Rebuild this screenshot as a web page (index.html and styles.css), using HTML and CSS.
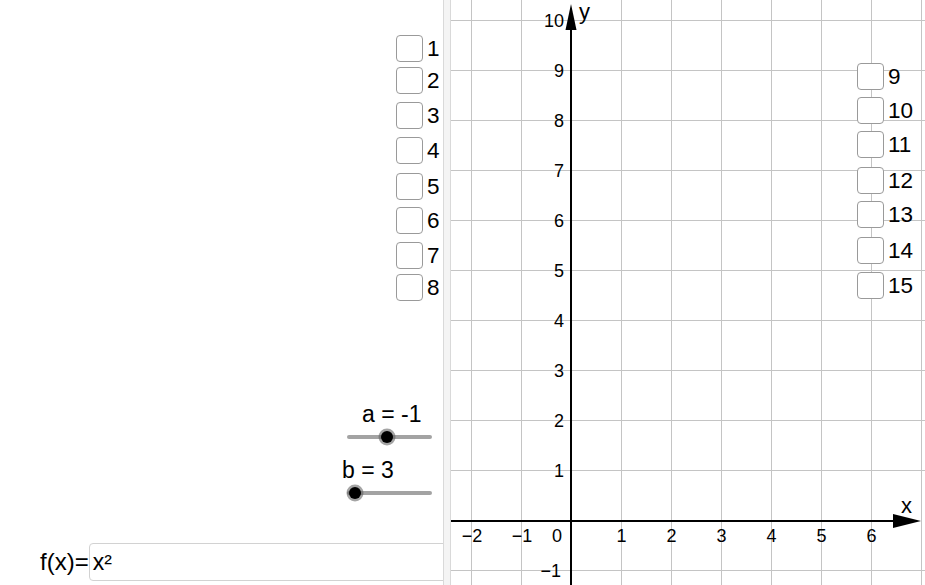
FILE: index.html
```html
<!DOCTYPE html>
<html>
<head>
<meta charset="utf-8">
<link rel="stylesheet" href="styles.css">
</head>
<body>
<div class="app">
  <div class="left">
    <label class="cb" style="top:35px;left:396px"><span class="box"></span><span class="cb-text">1</span></label>
    <label class="cb" style="top:67px;left:396px"><span class="box"></span><span class="cb-text">2</span></label>
    <label class="cb" style="top:102px;left:396px"><span class="box"></span><span class="cb-text">3</span></label>
    <label class="cb" style="top:137px;left:396px"><span class="box"></span><span class="cb-text">4</span></label>
    <label class="cb" style="top:173px;left:396px"><span class="box"></span><span class="cb-text">5</span></label>
    <label class="cb" style="top:207px;left:396px"><span class="box"></span><span class="cb-text">6</span></label>
    <label class="cb" style="top:242px;left:396px"><span class="box"></span><span class="cb-text">7</span></label>
    <label class="cb" style="top:274px;left:396px"><span class="box"></span><span class="cb-text">8</span></label>

    <div class="slider slider-a">
      <div class="slider-label">a = -1</div>
      <div class="track"><span class="knob" style="left:40px"></span></div>
    </div>
    <div class="slider slider-b">
      <div class="slider-label">b = 3</div>
      <div class="track"><span class="knob" style="left:8px"></span></div>
    </div>

    <div class="input-row">
      <span class="input-label">f(x)=</span>
      <div class="input-box">x²</div>
    </div>
  </div>
  <div class="divider"></div>
  <div class="graphics">
    <svg class="plot" width="474" height="585" viewBox="451 0 474 585" xmlns="http://www.w3.org/2000/svg">
      <g class="grid" stroke="#c4c4c4" stroke-width="1">
        <line x1="471.5" y1="0" x2="471.5" y2="585"/>
        <line x1="521.5" y1="0" x2="521.5" y2="585"/>
        <line x1="621.5" y1="0" x2="621.5" y2="585"/>
        <line x1="671.5" y1="0" x2="671.5" y2="585"/>
        <line x1="721.5" y1="0" x2="721.5" y2="585"/>
        <line x1="771.5" y1="0" x2="771.5" y2="585"/>
        <line x1="821.5" y1="0" x2="821.5" y2="585"/>
        <line x1="871.5" y1="0" x2="871.5" y2="585"/>
        <line x1="921.5" y1="0" x2="921.5" y2="585"/>
        <line x1="451" y1="20.5" x2="925" y2="20.5"/>
        <line x1="451" y1="70.5" x2="925" y2="70.5"/>
        <line x1="451" y1="120.5" x2="925" y2="120.5"/>
        <line x1="451" y1="170.5" x2="925" y2="170.5"/>
        <line x1="451" y1="220.5" x2="925" y2="220.5"/>
        <line x1="451" y1="270.5" x2="925" y2="270.5"/>
        <line x1="451" y1="320.5" x2="925" y2="320.5"/>
        <line x1="451" y1="370.5" x2="925" y2="370.5"/>
        <line x1="451" y1="420.5" x2="925" y2="420.5"/>
        <line x1="451" y1="470.5" x2="925" y2="470.5"/>
        <line x1="451" y1="570.5" x2="925" y2="570.5"/>
      </g>
      <g class="axes" stroke="#000" stroke-width="2">
        <line x1="451" y1="521" x2="896" y2="521"/>
        <line x1="571" y1="26" x2="571" y2="585"/>
      </g>
      <polygon points="571,4 565.5,30 576.5,30" fill="#000"/>
      <polygon points="921,521 893,514 893,528" fill="#000"/>
      <g class="ylabels" text-anchor="end">
        <text x="564" y="27">10</text>
        <text x="564" y="77">9</text>
        <text x="564" y="127">8</text>
        <text x="564" y="177">7</text>
        <text x="564" y="227">6</text>
        <text x="564" y="277">5</text>
        <text x="564" y="327">4</text>
        <text x="564" y="377">3</text>
        <text x="564" y="427">2</text>
        <text x="564" y="477">1</text>
        <text x="561" y="577">−1</text>
      </g>
      <g class="xlabels" text-anchor="middle">
        <text x="472" y="542">−2</text>
        <text x="522" y="542">−1</text>
        <text x="557" y="542">0</text>
        <text x="621.5" y="542">1</text>
        <text x="671.5" y="542">2</text>
        <text x="721.5" y="542">3</text>
        <text x="771.5" y="542">4</text>
        <text x="821.5" y="542">5</text>
        <text x="871.5" y="542">6</text>
      </g>
      <text class="axis-name" x="579" y="19">y</text>
      <text class="axis-name" x="901" y="513">x</text>
    </svg>
    <label class="cb" style="top:63px;left:406px"><span class="box"></span><span class="cb-text">9</span></label>
    <label class="cb" style="top:97px;left:406px"><span class="box"></span><span class="cb-text">10</span></label>
    <label class="cb" style="top:131px;left:406px"><span class="box"></span><span class="cb-text">11</span></label>
    <label class="cb" style="top:167px;left:406px"><span class="box"></span><span class="cb-text">12</span></label>
    <label class="cb" style="top:201px;left:406px"><span class="box"></span><span class="cb-text">13</span></label>
    <label class="cb" style="top:237px;left:406px"><span class="box"></span><span class="cb-text">14</span></label>
    <label class="cb" style="top:272px;left:406px"><span class="box"></span><span class="cb-text">15</span></label>
  </div>
</div>
</body>
</html>
```

FILE: styles.css
```css
html, body {
  margin: 0;
  padding: 0;
  background: #fff;
}

body {
  font-family: "Liberation Sans", Arial, sans-serif;
  color: #000;
  overflow: hidden;
}

.app {
  display: flex;
  width: 925px;
  height: 585px;
  overflow: hidden;
}

.left {
  position: relative;
  width: 443px;
  flex-shrink: 0;
  overflow: hidden;
  display: flex;
  flex-direction: column;
  justify-content: flex-end;
}

.divider {
  width: 6px;
  flex-shrink: 0;
  background: #f4f4f4;
  border-left: 1px solid #d9d9d9;
  border-right: 1px solid #d9d9d9;
}

.graphics {
  position: relative;
  flex: 1;
  overflow: hidden;
}

.plot {
  display: block;
}

.plot text {
  font-family: "Liberation Sans", Arial, sans-serif;
  font-size: 18px;
  fill: #000;
}

.plot .axis-name {
  font-size: 22px;
}

/* checkboxes placed on the canvas */
.cb {
  position: absolute;
  display: flex;
  align-items: center;
  height: 27px;
}

.box {
  box-sizing: border-box;
  width: 27px;
  height: 27px;
  border: 1px solid #9a9a9a;
  border-radius: 4px;
  background: #fff;
}

.cb-text {
  font-size: 22.5px;
  line-height: 22px;
  margin-left: 4px;
}

/* sliders */
.slider {
  position: absolute;
  left: 347px;
  width: 85px;
  display: flex;
  flex-direction: column;
}

.slider-a {
  top: 403px;
}

.slider-b {
  top: 459px;
}

.slider-label {
  font-size: 23px;
  line-height: 23px;
  white-space: nowrap;
}

.slider-a .slider-label {
  margin-left: 15px;
}

.slider-b .slider-label {
  margin-left: -5px;
}

.track {
  position: relative;
  height: 18px;
  margin-top: 2px;
}

.track::before {
  content: "";
  position: absolute;
  left: 0;
  right: 0;
  top: 7px;
  height: 4px;
  border-radius: 2px;
  background: #a3a3a3;
}

.knob {
  position: absolute;
  top: 3px;
  width: 12px;
  height: 12px;
  margin-left: -6px;
  border-radius: 50%;
  background: #000;
  box-shadow: 0 0 0 2.5px rgba(90, 90, 90, 0.55);
}

/* input bar */
.input-row {
  display: flex;
  align-items: center;
  padding: 0 0 4px 40px;
}

.input-label {
  font-size: 24px;
  line-height: 24px;
  white-space: nowrap;
}

.input-box {
  box-sizing: border-box;
  flex-shrink: 0;
  width: 400px;
  height: 38px;
  margin-left: 0;
  padding-left: 3px;
  border: 1px solid #d2d2d2;
  border-radius: 4px;
  display: flex;
  align-items: center;
  font-size: 23px;
}
```
